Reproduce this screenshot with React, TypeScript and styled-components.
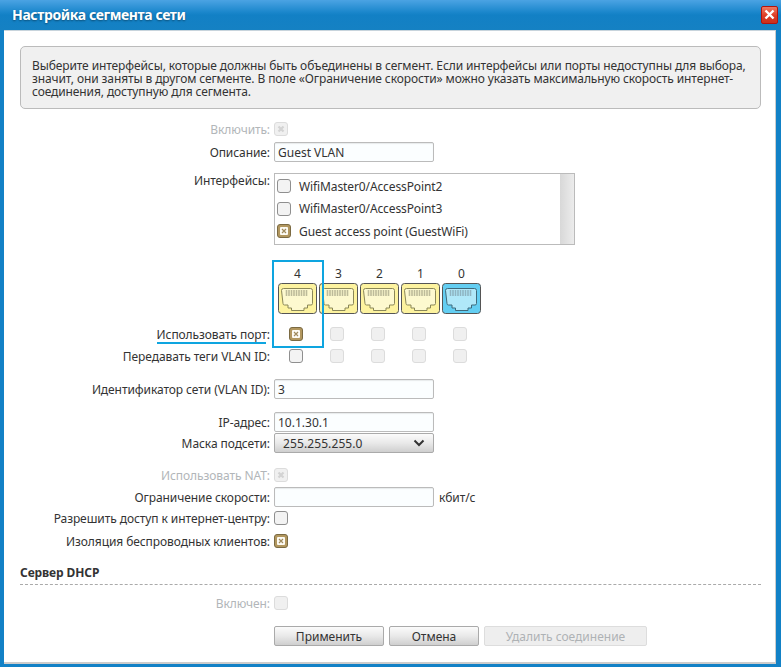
import styled, { createGlobalStyle } from "styled-components";

const GlobalStyle = createGlobalStyle`
  html, body {
    margin: 0;
    padding: 0;
    background: #1281c6;
  }
  body {
    font-family: "Noto Sans", "Open Sans", sans-serif;
    font-size: 12px;
    letter-spacing: -0.11px;
    color: #333;
  }
`;

const Dialog = styled.div`
  width: 781px;
  height: 667px;
  display: flex;
  flex-direction: column;
  overflow: hidden;
  background: #1281c6;
`;

const TitleBar = styled.div`
  height: 30px;
  flex: none;
  display: flex;
  align-items: center;
  justify-content: space-between;
  padding: 0 3px 0 12px;
  box-sizing: border-box;
  background: linear-gradient(#4ba3e3 0, #1b87cc 12px, #1280c5 15px, #1581c3 100%);
`;

const Title = styled.div`
  margin-top: -1px;
  color: #fff;
  font-size: 14px;
  font-weight: 700;
  letter-spacing: -0.4px;
  text-shadow: 0 1px 2px rgba(0, 0, 0, 0.4);
`;

const CloseButton = styled.button`
  width: 17px;
  height: 18px;
  margin-top: -1px;
  padding: 0;
  display: flex;
  align-items: center;
  justify-content: center;
  box-sizing: border-box;
  border: 1px solid #b3140d;
  border-radius: 2px;
  background: linear-gradient(#ef7a62, #dd3c24 55%, #c9301d);
`;

const Content = styled.div`
  flex: 1;
  margin: 0 5px 3px 4px;
  padding: 15px 14px 0 16px;
  box-sizing: border-box;
  background: #fff;
  border-top: 1px solid #c8d4dc;
  border-bottom: 2px solid #ccc;
  border-right: 1px solid #ccc;
`;

const Notice = styled.div`
  height: 63px;
  box-sizing: border-box;
  padding: 12px 8px 0 11px;
  background: #f0f0f0;
  border: 1px solid #bbb;
  border-radius: 5px;
  line-height: 13px;
  white-space: nowrap;
  color: #333;
`;

const Row = styled.div<{ $top: number }>`
  display: grid;
  grid-template-columns: 250px auto;
  column-gap: 4px;
  align-items: center;
  justify-content: start;
  margin-top: ${(p) => p.$top}px;
`;

const Label = styled.label<{ $off?: boolean }>`
  position: relative;
  padding-top: 1px;
  margin-bottom: -1px;
  text-align: right;
  white-space: nowrap;
  line-height: 14px;
  letter-spacing: -0.08px;
  color: ${(p) => (p.$off ? "#b2b6b9" : "#333")};
`;

const TopLabel = styled(Label)`
  align-self: start;
`;

const Underlined = styled(Label)`
  &::after {
    content: "";
    position: absolute;
    right: 4px;
    bottom: -2px;
    width: 109px;
    height: 2px;
    background: #0ea5e0;
  }
`;

const Field = styled.div`
  display: flex;
  align-items: center;
  gap: 5px;
`;

const TextInput = styled.input`
  width: 160px;
  height: 20px;
  box-sizing: border-box;
  padding: 0 3px;
  border: 1px solid #bbb;
  border-radius: 2px;
  background: #fbfeff;
  box-shadow: inset 0 1px 1px rgba(0, 0, 0, 0.08);
  font: inherit;
  letter-spacing: 0;
  color: #333;
  outline: none;
`;

const SelectBox = styled.div`
  width: 160px;
  height: 20px;
  box-sizing: border-box;
  padding: 0 8px;
  display: flex;
  align-items: center;
  justify-content: space-between;
  border: 1px solid #aaa;
  border-radius: 2px;
  background: linear-gradient(#fbfbfb, #e9e9e9 50%, #cfcfcf);
  letter-spacing: 0.1px;
  color: #333;
`;

const Box = styled.span<{ $state: "on" | "off" | "locked" | "lockedOn" }>`
  width: 14px;
  height: 14px;
  flex: none;
  display: inline-flex;
  align-items: center;
  justify-content: center;
  box-sizing: border-box;
  border-radius: 3px;
  border: 1px solid
    ${(p) =>
      p.$state === "on"
        ? "#7b6a42"
        : p.$state === "off"
          ? "#8f8f8f"
          : "#dcdcdc"};
  background: ${(p) =>
    p.$state === "on" ? "#b2975f" : p.$state === "off" ? "#f3f3f3" : "#f0f0f0"};
`;

const List = styled.div`
  width: 301px;
  height: 72px;
  box-sizing: border-box;
  display: flex;
  border: 1px solid #bbb;
`;

const ListItems = styled.div`
  flex: 1;
  padding: 1px 0 0 2px;
`;

const ListItem = styled.div`
  height: 22.5px;
  display: flex;
  align-items: center;
  gap: 8px;
  color: #333;
`;

const ScrollTrack = styled.div`
  width: 14px;
  background: linear-gradient(90deg, #d8d8d8, #ececec);
`;

const PortCols = styled.div<{ $boxes?: boolean }>`
  position: relative;
  display: grid;
  grid-template-columns: repeat(5, 39px);
  column-gap: 2px;
  padding-left: ${(p) => (p.$boxes ? "2.5px" : "4px")};
  justify-items: center;
`;

const PortNumber = styled.div`
  line-height: 13px;
  margin-bottom: 3px;
  color: #333;
`;

const PortCell = styled.div`
  display: flex;
  flex-direction: column;
  align-items: center;
`;

const PortGlyph = styled.svg`
  display: block;
`;

const Highlight = styled.div`
  position: absolute;
  left: -2px;
  top: -7px;
  width: 52px;
  height: 88px;
  box-sizing: border-box;
  border: 2px solid #0ea5e0;
  pointer-events: none;
`;

const Section = styled.h3`
  margin: 17px 0 0;
  font-size: 12px;
  line-height: 16px;
  font-weight: 700;
  letter-spacing: -0.1px;
  color: #333;
`;

const Dashed = styled.div`
  margin-top: 3px;
  border-top: 1px dashed #aaa;
`;

const Actions = styled.div`
  display: flex;
  gap: 5px;
  margin: 16px 0 0 254px;
`;

const Button = styled.button<{ $w: number }>`
  width: ${(p) => p.$w}px;
  height: 20px;
  padding: 0;
  box-sizing: border-box;
  border: 1px solid ${(p) => (p.disabled ? "#ddd" : "#aaa")};
  border-radius: 2px;
  background: ${(p) =>
    p.disabled
      ? "#eee"
      : "linear-gradient(#fbfbfb, #e9e9e9 50%, #cfcfcf)"};
  color: ${(p) => (p.disabled ? "#aeb2b5" : "#333")};
  font: inherit;
`;

const Mark = () => (
  <svg width="8" height="8" viewBox="0 0 8 8">
    <rect width="8" height="8" rx="1" fill="#fdfbf4" />
    <path d="M2 2 6 6M6 2 2 6" stroke="#a08a5c" strokeWidth="1.200" />
  </svg>
);

const LockedMark = () => (
  <svg width="10" height="10" viewBox="0 0 10 10">
    <path d="M2.500 2.500 7.500 7.500M7.500 2.500 2.500 7.500" stroke="#d3d3d3" strokeWidth="2.200" />
  </svg>
);

const Port = ({ blue }: { blue?: boolean }) => {
  const fill = blue ? "#63cef2" : "#fdf39f";
  const inner = blue ? "#b0e8f9" : "#fdf9cf";
  const line = blue ? "#3e6a7c" : "#8a8758";
  const pin = blue ? "#8fb4c2" : "#bdbb9a";
  return (
    <PortGlyph width="39" height="31" viewBox="0 0 39 31">
      <rect x="0.5" y="0.5" width="38" height="30" rx="3" fill={fill} stroke="#555" />
      <path
        d="M3.500 7.500a2 2 0 0 1 2-2h27a2 2 0 0 1 2 2v13a1.500 1.500 0 0 1-1.500 1.500h-3.500v3h-3.500v2.500h-12.500v-2.500h-3.500v-3h-3.500a1.500 1.500 0 0 1-1.500-1.500z"
        fill={inner}
        stroke={line}
        strokeWidth="1"
      />
      <path
        d="M8.500 7v6M11 7v6M13.500 7v6M16 7v6M18.500 7v6M21 7v6M23.500 7v6M26 7v6M28.500 7v6"
        stroke={pin}
        strokeWidth="1.600"
      />
    </PortGlyph>
  );
};

const ports = ["4", "3", "2", "1", "0"];

export default function App() {
  return (
    <>
      <GlobalStyle />
      <Dialog>
        <TitleBar>
          <Title>Настройка сегмента сети</Title>
          <CloseButton aria-label="Закрыть">
            <svg width="11" height="11" viewBox="0 0 11 11">
              <path d="M1.500 1.500 9.500 9.500M9.500 1.500 1.500 9.500" stroke="#fff" strokeWidth="2.400" />
            </svg>
          </CloseButton>
        </TitleBar>
        <Content>
          <Notice>
            Выберите интерфейсы, которые должны быть объединены в сегмент. Если интерфейсы или порты недоступны для выбора,
            <br />
            значит, они заняты в другом сегменте. В поле «Ограничение скорости» можно указать максимальную скорость интернет-
            <br />
            соединения, доступную для сегмента.
          </Notice>

          <Row $top={13}>
            <Label $off>Включить:</Label>
            <Box $state="lockedOn"><LockedMark /></Box>
          </Row>
          <Row $top={6}>
            <Label>Описание:</Label>
            <TextInput defaultValue="Guest VLAN" />
          </Row>
          <Row $top={11}>
            <TopLabel>Интерфейсы:</TopLabel>
            <List>
              <ListItems>
                <ListItem><Box $state="off" />WifiMaster0/AccessPoint2</ListItem>
                <ListItem><Box $state="off" />WifiMaster0/AccessPoint3</ListItem>
                <ListItem><Box $state="on"><Mark /></Box>Guest access point (GuestWiFi)</ListItem>
              </ListItems>
              <ScrollTrack />
            </List>
          </Row>

          <Row $top={22}>
            <span />
            <PortCols>
              <Highlight />
              {ports.map((n, i) => (
                <PortCell key={n}>
                  <PortNumber>{n}</PortNumber>
                  <Port blue={i === 4} />
                </PortCell>
              ))}
            </PortCols>
          </Row>
          <Row $top={13}>
            <Underlined>Использовать порт:</Underlined>
            <PortCols $boxes>
              <Box $state="on"><Mark /></Box>
              {[1, 2, 3, 4].map((n) => <Box key={n} $state="locked" />)}
            </PortCols>
          </Row>
          <Row $top={8}>
            <Label>Передавать теги VLAN ID:</Label>
            <PortCols $boxes>
              <Box $state="off" />
              {[1, 2, 3, 4].map((n) => <Box key={n} $state="locked" />)}
            </PortCols>
          </Row>

          <Row $top={16}>
            <Label>Идентификатор сети (VLAN ID):</Label>
            <TextInput defaultValue="3" />
          </Row>
          <Row $top={13}>
            <Label>IP-адрес:</Label>
            <TextInput defaultValue="10.1.30.1" />
          </Row>
          <Row $top={1}>
            <Label>Маска подсети:</Label>
            <SelectBox>
              255.255.255.0
              <svg width="12" height="8" viewBox="0 0 12 8">
                <path d="M1.500 1.500 6 6 10.500 1.500" fill="none" stroke="#333" strokeWidth="2" />
              </svg>
            </SelectBox>
          </Row>

          <Row $top={15}>
            <Label $off>Использовать NAT:</Label>
            <Box $state="lockedOn"><LockedMark /></Box>
          </Row>
          <Row $top={5}>
            <Label>Ограничение скорости:</Label>
            <Field>
              <TextInput />
              кбит/с
            </Field>
          </Row>
          <Row $top={4}>
            <Label>Разрешить доступ к интернет-центру:</Label>
            <Box $state="off" />
          </Row>
          <Row $top={9}>
            <Label>Изоляция беспроводных клиентов:</Label>
            <Box $state="on"><Mark /></Box>
          </Row>

          <Section>Сервер DHCP</Section>
          <Dashed />
          <Row $top={11}>
            <Label $off>Включен:</Label>
            <Box $state="locked" />
          </Row>
          <Actions>
            <Button $w={110}>Применить</Button>
            <Button $w={90}>Отмена</Button>
            <Button $w={163} disabled>Удалить соединение</Button>
          </Actions>
        </Content>
      </Dialog>
    </>
  );
}
